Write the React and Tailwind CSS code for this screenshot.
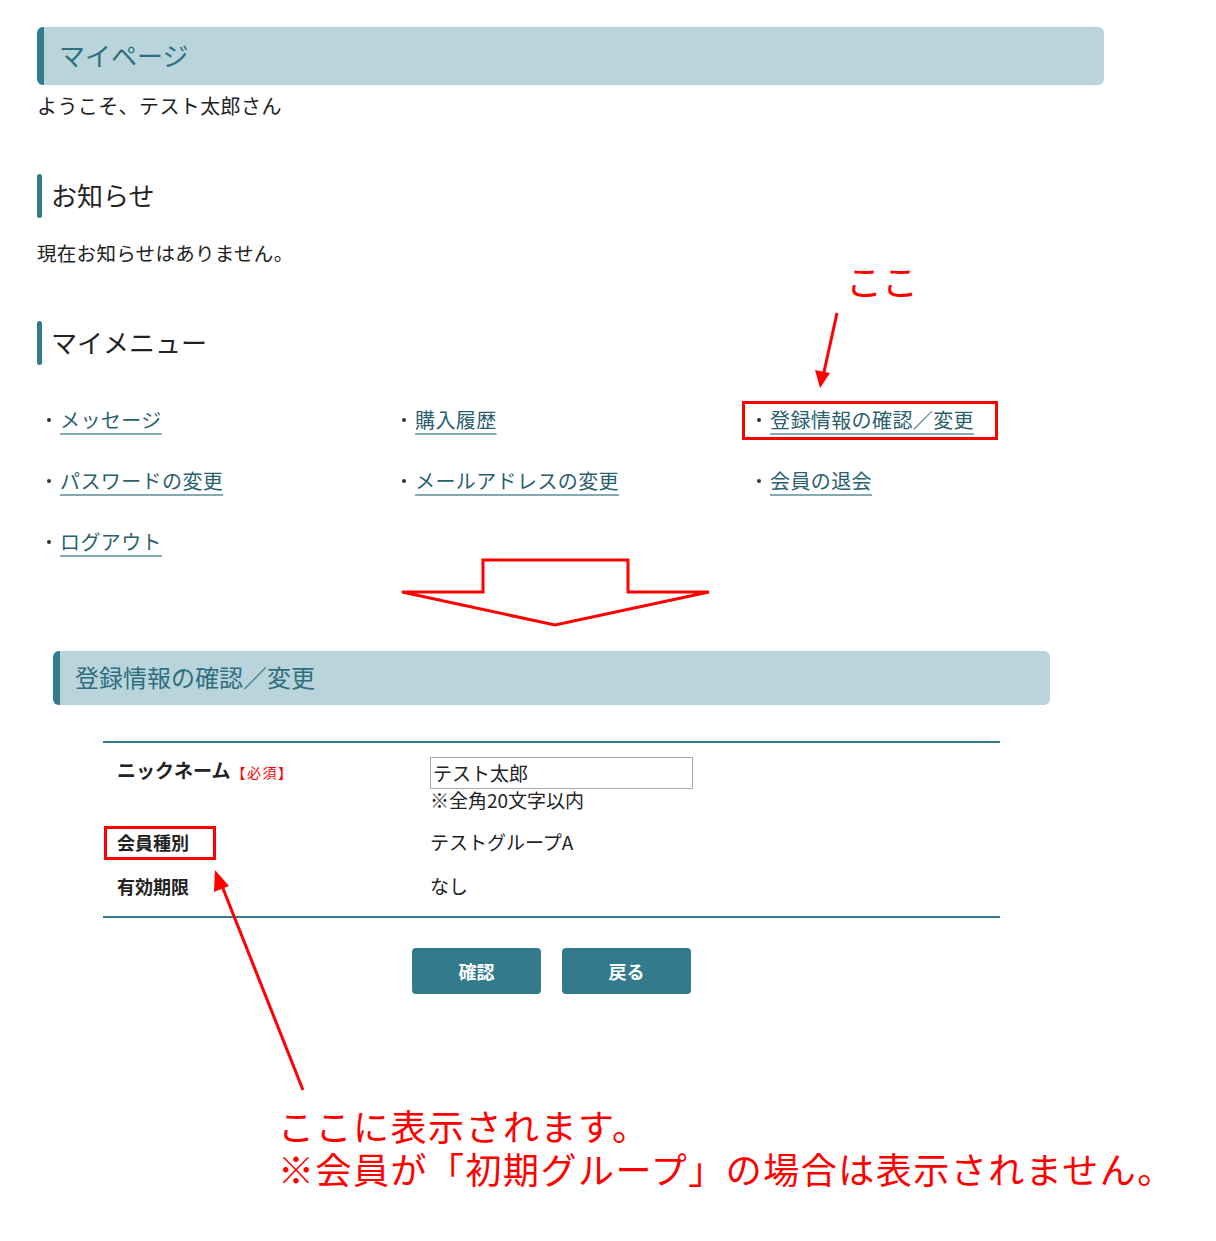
const font = { fontFamily: '"Noto Sans CJK JP", "Noto Sans", sans-serif' };

function PageHeader({ children, className }) {
  return (
    <div className={`flex items-center rounded-md bg-[#bad4dc] border-l-[7px] border-[#337a8c] ${className}`}>
      {children}
    </div>
  );
}

function SectionTitle({ children, className }) {
  return (
    <div className={`flex h-[44px] items-stretch ${className}`}>
      <div className="w-[5px] rounded-full bg-[#337a8c]" />
      <h2 className="ml-[9px] flex items-center pb-[3px] text-[26px] leading-none text-[#222]">{children}</h2>
    </div>
  );
}

function MenuLink({ children }) {
  return (
    <div className="flex h-[61px] items-center pl-[10px]">
      <span className="mr-[9px] h-[4px] w-[4px] rounded-full bg-[#333]" />
      <a href="#" className="text-[20px] leading-[28px] tracking-[0.4px] text-[#2a5f6e] underline decoration-[#86aab4] underline-offset-[5px]">
        {children}
      </a>
    </div>
  );
}

export default function App() {
  return (
    <div style={font} className="relative h-[1241px] w-[1216px] overflow-hidden bg-white text-[#222]">
      <div className="pl-[37px] pt-[27px]">
        {/* マイページ */}
        <PageHeader className="h-[58px] w-[1067px] pl-[15px]">
          <h1 className="pb-[3px] text-[26px] leading-none text-[#2f6f80]">マイページ</h1>
        </PageHeader>
        <p className="mt-[7px] text-[20px] leading-[28px] tracking-[0.4px]">ようこそ、テスト太郎さん</p>

        {/* お知らせ */}
        <SectionTitle className="mt-[54px]">お知らせ</SectionTitle>
        <p className="mt-[21px] text-[19.5px] leading-[28px] tracking-[0.3px]">現在お知らせはありません。</p>

        {/* マイメニュー */}
        <SectionTitle className="mt-[54px]">マイメニュー</SectionTitle>
        <div className="mt-[24px] grid w-[1065px] grid-cols-3">
          <MenuLink>メッセージ</MenuLink>
          <MenuLink>購入履歴</MenuLink>
          <MenuLink>登録情報の確認／変更</MenuLink>
          <MenuLink>パスワードの変更</MenuLink>
          <MenuLink>メールアドレスの変更</MenuLink>
          <MenuLink>会員の退会</MenuLink>
          <MenuLink>ログアウト</MenuLink>
        </div>

        {/* 登録情報の確認／変更 */}
        <PageHeader className="ml-[16px] mt-[79px] h-[54px] w-[997px] pl-[15px]">
          <h1 className="pb-[2px] text-[24px] leading-none text-[#2f6f80]">登録情報の確認／変更</h1>
        </PageHeader>

        <div className="ml-[66px] mt-[36px] w-[897px] border-y-2 border-[#337a8c] pb-[17px] pl-[14px] pt-[14px]">
          <div className="flex">
            <div className="w-[313px] text-[19px] leading-[26px] font-bold">
              ニックネーム<span className="ml-[1px] text-[14px] tracking-[1.5px] font-normal text-[#f00]">【必須】</span>
            </div>
            <div>
              <div className="flex h-[32px] w-[263px] items-center border border-[#a9a9a9] pl-[2px] text-[19px]">テスト太郎</div>
              <div className="text-[19px] leading-[22px]">※全角20文字以内</div>
            </div>
          </div>
          <div className="mt-[18px] flex text-[19px] leading-[26px]">
            <div className="w-[313px] text-[18px] font-bold">会員種別</div>
            <div>テストグループA</div>
          </div>
          <div className="mt-[18px] flex text-[19px] leading-[26px]">
            <div className="w-[313px] text-[18px] font-bold">有効期限</div>
            <div>なし</div>
          </div>
        </div>

        <div className="ml-[66px] mt-[30px] flex w-[897px] justify-center gap-[21px]">
          <button className="h-[46px] w-[129px] rounded-[4px] bg-[#337a8c] text-[18px] font-bold text-white">確認</button>
          <button className="h-[46px] w-[129px] rounded-[4px] bg-[#337a8c] text-[18px] font-bold text-white">戻る</button>
        </div>
      </div>

      {/* annotations */}
      <svg className="pointer-events-none absolute inset-0" width="1216" height="1241">
        <rect x="743.5" y="402.5" width="253" height="36" fill="none" stroke="#f00" strokeWidth="3" />
        <rect x="105.5" y="827.5" width="109" height="31" fill="none" stroke="#f00" strokeWidth="3" />
        <line x1="837" y1="313" x2="824" y2="372" stroke="#f00" strokeWidth="3" />
        <polygon points="815,370 830,373 820,388" fill="#f00" />
        <polygon
          points="483,560 628,560 628,592 709,592 555,625 402,592 483,592"
          fill="white"
          stroke="#f00"
          strokeWidth="3"
          strokeLinejoin="miter"
        />
        <line x1="303" y1="1090" x2="222" y2="886" stroke="#f00" strokeWidth="3" />
        <polygon points="215,870 214,892 229,886" fill="#f00" />
      </svg>
      <div className="absolute left-[846px] top-[258px] text-[36px] leading-[44px] text-[#f00]">ここ</div>
      <div className="absolute left-[278px] top-[1104px] text-[36px] leading-[43px] tracking-[1.5px] text-[#f00]">
        <div>ここに表示されます。</div>
        <div>※会員が「初期グループ」の場合は表示されません。</div>
      </div>
    </div>
  );
}
